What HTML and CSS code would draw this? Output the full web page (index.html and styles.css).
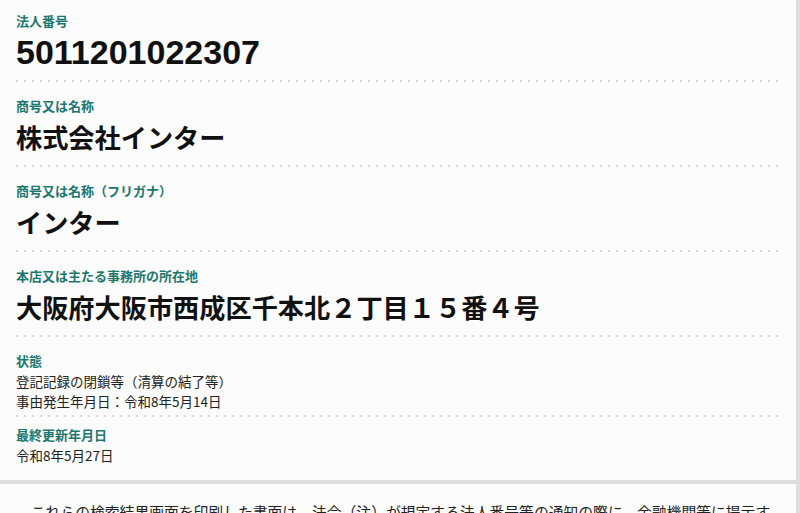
FILE: index.html
```html
<!DOCTYPE html>
<html lang="ja">
<head>
<meta charset="utf-8">
<title>法人番号</title>
<link rel="stylesheet" href="styles.css">
</head>
<body>
<main class="page">
  <section class="card">
    <dl class="list">
      <div class="item item--big item--first">
        <dt class="label">法人番号</dt>
        <dd class="value value--number">5011201022307</dd>
      </div>
      <div class="item item--big">
        <dt class="label">商号又は名称</dt>
        <dd class="value">株式会社インター</dd>
      </div>
      <div class="item item--big">
        <dt class="label">商号又は名称（フリガナ）</dt>
        <dd class="value">インター</dd>
      </div>
      <div class="item item--big">
        <dt class="label">本店又は主たる事務所の所在地</dt>
        <dd class="value">大阪府大阪市西成区千本北２丁目１５番４号</dd>
      </div>
      <div class="item item--status">
        <dt class="label">状態</dt>
        <dd class="text">登記記録の閉鎖等（清算の結了等）</dd>
        <dd class="text">事由発生年月日：令和8年5月14日</dd>
      </div>
      <div class="item item--last">
        <dt class="label">最終更新年月日</dt>
        <dd class="text">令和8年5月27日</dd>
      </div>
    </dl>
  </section>
  <section class="card card--note">
    <p class="note">　これらの検索結果画面を印刷した書面は、法令（注）が規定する法人番号等の通知の際に、金融機関等に提示する場合の書面として利用することができます。</p>
  </section>
</main>
</body>
</html>
```

FILE: styles.css
```css
html, body {
  margin: 0;
  padding: 0;
}

body {
  background: #dedede;
  font-family: "Noto Sans CJK JP", "Noto Sans", sans-serif;
  color: #111;
  overflow: hidden;
}

.page {
  width: 796px;
  display: flex;
  flex-direction: column;
  gap: 4px;
}

.card {
  background: #fcfcfc;
  padding: 0 16px 11px;
}

.card--note {
  padding: 16px 16px 16px;
}

.list {
  margin: 0;
}

.item {
  position: relative;
  display: flex;
  flex-direction: column;
  padding: 8px 0 4px;
}

.item::after {
  content: "";
  position: absolute;
  left: 0;
  right: 0;
  bottom: 0;
  height: 2px;
  background-image: linear-gradient(to right, #d6d6d6 2px, transparent 2px);
  background-size: 8px 2px;
  background-repeat: repeat-x;
}

.item--last::after {
  display: none;
}

.item--big {
  padding: 14px 0 12px;
}

.item--first {
  padding-top: 11px;
}

.item--status {
  padding: 14px 0 6px;
}

.label {
  font-size: 13px;
  line-height: 20px;
  font-weight: 700;
  color: #1b776f;
}

.value {
  margin: 3px 0 0;
  font-size: 26.2px;
  line-height: 36px;
  font-weight: 700;
  color: #111;
}

.value--number {
  font-family: "Liberation Sans", Arial, sans-serif;
  font-size: 34px;
}

.text {
  margin: 0;
  font-size: 13.5px;
  line-height: 20px;
  color: #222;
}

.note {
  margin: 0;
  font-size: 14.8px;
  line-height: 24px;
  color: #222;
}
```
